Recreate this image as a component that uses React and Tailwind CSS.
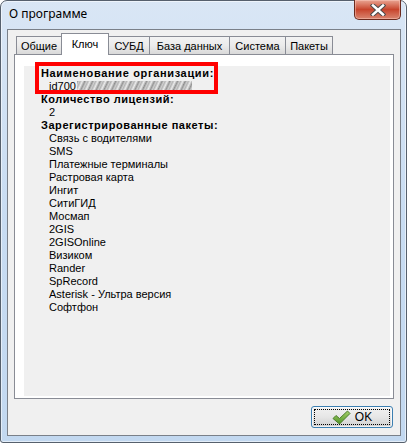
import React from "react";

const items = [
  "Связь с водителями",
  "SMS",
  "Платежные терминалы",
  "Растровая карта",
  "Ингит",
  "СитиГИД",
  "Мосмап",
  "2GIS",
  "2GISOnline",
  "Визиком",
  "Rander",
  "SpRecord",
  "Asterisk - Ультра версия",
  "Софтфон",
];

function Tab({ label, w, selected }) {
  if (selected) {
    return (
      <div
        className="relative z-10 -ml-px mb-[-1px] flex h-[22px] items-start justify-center border-x border-t border-[#898c95] bg-white pt-[2px]"
        style={{ width: w }}
      >
        {label}
      </div>
    );
  }
  return (
    <div
      className="-ml-px flex h-[18px] items-center justify-center border-x border-t border-[#898c95] bg-gradient-to-b from-[#f3f3f3] via-[#ebebeb] to-[#d9d9d9] pt-px first:ml-0"
      style={{ width: w }}
    >
      {label}
    </div>
  );
}

function CloseButton() {
  return (
    <div className="mr-[5px] mt-[-1px] flex h-[20px] w-[47px] items-center justify-center rounded-b-[5px] border border-t-0 border-[#6b2a1e] bg-gradient-to-b from-[#e8a493] via-[#c7442c] to-[#d9846f] shadow-[inset_0_0_0_1px_rgba(255,210,200,0.45)]">
      <svg width="16" height="12" viewBox="0 0 16 12">
        <path d="M3 1.5 L13 10.5 M13 1.5 L3 10.5" stroke="#4a4a4a" strokeWidth="4.5" strokeLinecap="square" />
        <path d="M3 1.5 L13 10.5 M13 1.5 L3 10.5" stroke="#ffffff" strokeWidth="2.5" strokeLinecap="square" />
      </svg>
    </div>
  );
}

function CheckIcon() {
  return (
    <svg width="19" height="15" viewBox="0 0 19 15">
      <defs>
        <linearGradient id="g" x1="0" y1="0" x2="0" y2="1">
          <stop offset="0" stopColor="#a6d06a" />
          <stop offset="1" stopColor="#4f9426" />
        </linearGradient>
      </defs>
      <path
        d="M1 8.5 L4 5.5 L7.5 8.5 L15.5 1 L18 3.5 L7.5 14 Z"
        fill="url(#g)"
        stroke="#4b7d2c"
        strokeWidth="1"
        strokeLinejoin="round"
      />
    </svg>
  );
}

export default function App() {
  return (
    <div className="h-[443px] w-[407px] font-['Liberation_Sans',Arial,sans-serif] text-[11px] text-black">
      <div className="flex h-[443px] w-[407px] flex-col rounded-t-[7px] rounded-b-[3px] border border-[#56606d] bg-gradient-to-b from-[#d9e6f5] via-[#c8dcf2] to-[#c2d8f0] shadow-[inset_0_0_0_1px_rgba(255,255,255,0.55)]">
        {/* title bar */}
        <div className="flex h-[28px] items-start justify-between">
          <div className="pl-[8px] pt-[5px] font-['Noto_Sans','Open_Sans',sans-serif] text-[12px] leading-[16px] text-black">
            О программе
          </div>
          <CloseButton />
        </div>
        {/* client */}
        <div className="ml-[6px] mr-[5px] flex h-[407px] flex-col border border-[#7a8089] bg-[#f0f0f0]">
          <div className="flex h-[24px] items-end pl-[8px] pt-[3px]">
            <Tab label="Общие" w={46} />
            <Tab label="Ключ" w={48} selected />
            <Tab label="СУБД" w={42} />
            <Tab label="База данных" w={81} />
            <Tab label="Система" w={57} />
            <Tab label="Пакеты" w={48} />
          </div>
          <div className="ml-[6px] flex h-[345px] w-[380px] flex-col border border-[#898c95] bg-white">
            <div className="relative mb-[2px] ml-[9px] mr-[3px] mt-[11px] flex-1 bg-[#f0f0f0] pl-[17px] pt-px leading-[13px]">
              <div className="font-bold tracking-[0.65px]">Наименование организации:</div>
              <div className="flex items-center pl-[8px]">
                <span>id700</span>
                <span className="ml-px inline-block h-[12px] w-[115px] bg-[repeating-linear-gradient(115deg,#8e8e8e_0px,#cfcfcf_2px,#b4b4b4_3px,#ebebeb_5px,#a0a0a0_7px)]"></span>
              </div>
              <div className="font-bold tracking-[0.5px]">Количество лицензий:</div>
              <div className="pl-[8px]">2</div>
              <div className="font-bold tracking-[0.55px]">Зарегистрированные пакеты:</div>
              {items.map((it) => (
                <div key={it} className="pl-[8px]">
                  {it}
                </div>
              ))}
              <div className="absolute left-[11px] top-[-4px] h-[32px] w-[183px] border-4 border-[#ff0000]"></div>
            </div>
          </div>
          <div className="flex flex-1 justify-end pr-[7px] pt-[7px]">
            <div className="flex h-[22px] w-[82px] items-center justify-center rounded-[3px] border border-[#3c7fb1] bg-gradient-to-b from-[#f2f2f2] via-[#e6e6e6] to-[#cfcfcf] p-[2px] shadow-[inset_0_0_0_1px_rgba(255,255,255,0.7)]">
              <div className="flex h-full w-full items-center justify-center gap-[4px] border border-dotted border-black">
                <CheckIcon />
                <span className="text-[12px]">OK</span>
              </div>
            </div>
          </div>
        </div>
      </div>
    </div>
  );
}
